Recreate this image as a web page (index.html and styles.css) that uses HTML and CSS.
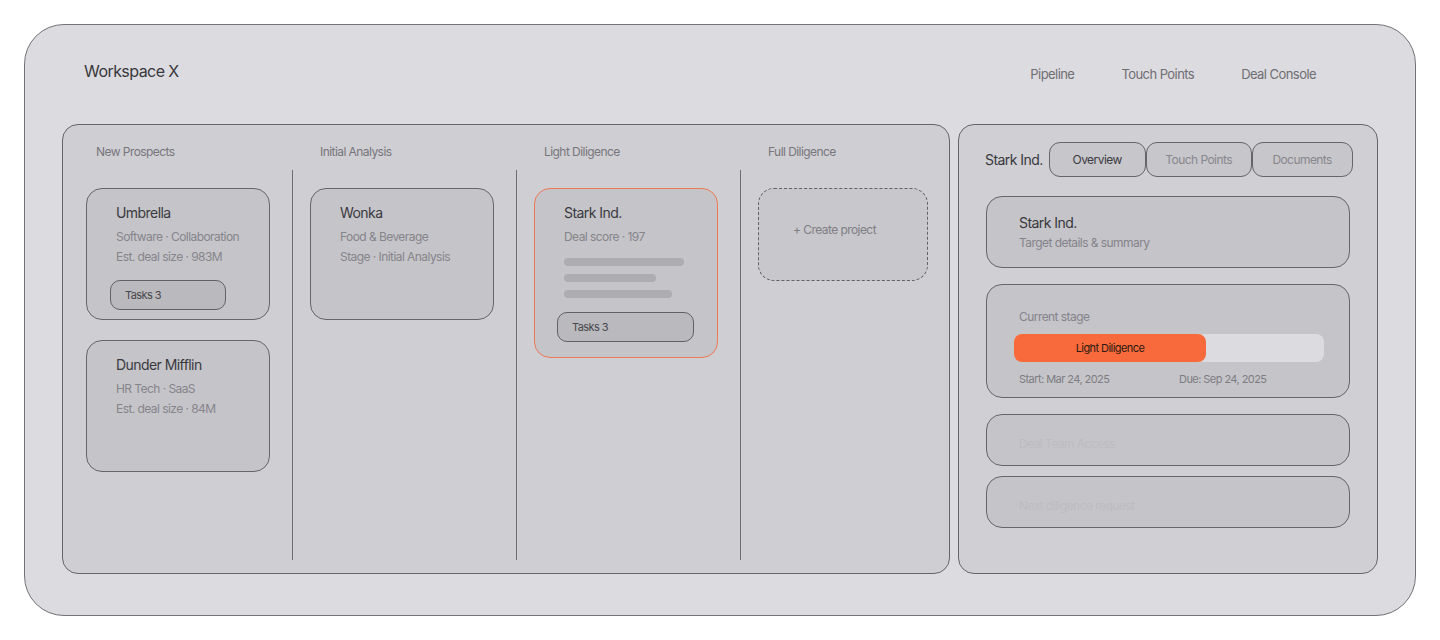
FILE: index.html
```html
<!DOCTYPE html>
<html lang="en">
<head>
<meta charset="utf-8">
<title>Workspace X</title>
<link rel="stylesheet" href="styles.css">
</head>
<body>
<div class="frame">
  <header class="topbar">
    <div class="brand">Workspace X</div>
    <nav class="nav">
      <span>Pipeline</span>
      <span>Touch Points</span>
      <span>Deal Console</span>
    </nav>
  </header>
  <main class="main">
    <section class="board">
      <div class="heads">
        <div class="head">New Prospects</div>
        <div class="head">Initial Analysis</div>
        <div class="head">Light Diligence</div>
        <div class="head">Full Diligence</div>
      </div>
      <div class="cols">
        <div class="col">
          <div class="card">
            <div class="c-title">Umbrella</div>
            <div class="c-line">Software · Collaboration</div>
            <div class="c-line">Est. deal size · 983M</div>
            <div class="tasks">Tasks 3</div>
          </div>
          <div class="card">
            <div class="c-title">Dunder Mifflin</div>
            <div class="c-line">HR Tech · SaaS</div>
            <div class="c-line">Est. deal size · 84M</div>
          </div>
        </div>
        <div class="col sep">
          <div class="card">
            <div class="c-title">Wonka</div>
            <div class="c-line">Food &amp; Beverage</div>
            <div class="c-line">Stage · Initial Analysis</div>
          </div>
        </div>
        <div class="col sep">
          <div class="card card-active">
            <div class="c-title">Stark Ind.</div>
            <div class="c-line">Deal score · 197</div>
            <div class="skel">
              <span class="sk sk1"></span>
              <span class="sk sk2"></span>
              <span class="sk sk3"></span>
            </div>
            <div class="tasks tasks-wide">Tasks 3</div>
          </div>
        </div>
        <div class="col sep">
          <div class="create">+ Create project</div>
        </div>
      </div>
    </section>
    <aside class="panel">
      <div class="p-head">
        <div class="p-name">Stark Ind.</div>
        <div class="tabs">
          <div class="tab tab-on t1">Overview</div>
          <div class="tab t2">Touch Points</div>
          <div class="tab t3">Documents</div>
        </div>
      </div>
      <div class="box box-sum">
        <div class="b-title">Stark Ind.</div>
        <div class="b-sub">Target details &amp; summary</div>
      </div>
      <div class="box box-stage">
        <div class="b-sub">Current stage</div>
        <div class="track"><div class="fill" style="width:192px">Light Diligence</div></div>
        <div class="dates">
          <span class="d1">Start: Mar 24, 2025</span>
          <span>Due: Sep 24, 2025</span>
        </div>
      </div>
      <div class="box box-ghost"><span class="ghost">Deal Team Access</span></div>
      <div class="box box-ghost box-last"><span class="ghost">Next diligence request</span></div>
    </aside>
  </main>
</div>
</body>
</html>
```
FILE: styles.css
```css
* { box-sizing: border-box; }
html, body { margin: 0; padding: 0; background: #ffffff; }
body {
  padding: 24px;
  font-family: Inter, "Noto Sans", "Liberation Sans", sans-serif;
  color: #3a3a3e;
  letter-spacing: -0.035em;
}
.frame {
  width: 1392px;
  height: 592px;
  border: 1px solid #737277;
  border-radius: 40px;
  background: #dcdbdf;
  padding: 0 37px 41px;
  display: flex;
  flex-direction: column;
}
.topbar {
  height: 99px;
  display: flex;
  justify-content: space-between;
  align-items: flex-start;
  padding: 36px 62px 0 22px;
}
.brand { font-size: 16px; line-height: 20px; color: #38383c; }
.nav { display: flex; gap: 47px; padding-top: 3px; font-size: 13px; line-height: 20px; color: #6f6e73; }
.main { flex: 1; display: flex; gap: 8px; }
.board {
  width: 888px;
  border: 1px solid #66656a;
  border-radius: 16px;
  background: #cfced3;
  padding: 0 0 13px 5px;
  display: flex;
  flex-direction: column;
}
.heads, .cols { display: grid; grid-template-columns: 224px 224px 224px 1fr; }
.heads { height: 45px; }
.head { padding: 19px 0 0 28px; font-size: 12px; line-height: 16px; color: #77767b; }
.cols { flex: 1; }
.col { padding: 18px 0 0 18px; display: flex; flex-direction: column; gap: 20px; }
.col.sep { border-left: 1px solid #6f6e73; padding-left: 17px; }
.card {
  width: 184px;
  height: 132px;
  border: 1px solid #66656a;
  border-radius: 16px;
  background: #c5c4c9;
  padding: 15px 0 0 29px;
}
.card-active { height: 170px; border-color: #ec7a55; }
.c-title { font-size: 14px; line-height: 18px; color: #3a3a3e; margin-bottom: 5px; }
.c-line { font-size: 12px; line-height: 20px; color: #86858a; }
.tasks {
  margin: 13px 0 0 -6px;
  width: 116px;
  height: 30px;
  border: 1px solid #626166;
  border-radius: 10px;
  background: #bab9be;
  font-size: 11px;
  line-height: 28px;
  padding-left: 14px;
  color: #48474c;
}
.skel { display: flex; flex-direction: column; gap: 8px; margin-top: 11px; }
.sk { display: block; height: 8px; border-radius: 4px; background: #adacb1; }
.sk1 { width: 120px; }
.sk2 { width: 92px; }
.sk3 { width: 108px; }
.tasks-wide { width: 137px; margin-left: -7px; margin-top: 14px; }
.create {
  width: 170px;
  height: 93px;
  border: 1.5px dashed #626166;
  border-radius: 16px;
  background: #c8c7cc;
  font-size: 12px;
  line-height: 16px;
  color: #7f7e83;
  padding: 33px 0 0 34px;
}
.panel {
  width: 420px;
  border: 1px solid #66656a;
  border-radius: 16px;
  background: #d0cfd4;
  padding: 17px 27px 0 26px;
  display: flex;
  flex-direction: column;
}
.p-head { display: flex; align-items: center; gap: 6px; height: 35px; margin-bottom: 19px; }
.p-name { font-size: 14px; color: #38383c; white-space: nowrap; flex-shrink: 0; }
.tabs { display: flex; flex-shrink: 0; }
.tab {
  height: 35px;
  border: 1px solid #66656a;
  border-radius: 11px;
  background: #c7c6cb;
  font-size: 12px;
  line-height: 33px;
  text-align: center;
  color: #88878c;
  white-space: nowrap;
}
.tab-on { color: #3a3a3e; }
.t1 { width: 97px; }
.t2 { width: 106px; }
.t3 { width: 101px; }
.box {
  width: 364px;
  margin-left: 1px;
  border: 1px solid #66656a;
  border-radius: 16px;
  background: #c5c4c9;
  padding: 0 0 0 32px;
  margin-bottom: 16px;
}
.box-sum { height: 72px; padding-top: 17px; }
.b-title { font-size: 14px; line-height: 18px; color: #38383c; }
.b-sub { font-size: 12px; line-height: 20px; color: #84838a; }
.box-sum .b-sub { margin-top: 1px; }
.box-stage { height: 114px; padding-top: 22px; }
.track {
  margin: 7px 0 0 -5px;
  width: 310px;
  height: 28px;
  border-radius: 8px;
  background: #dcdbdf;
}
.fill {
  height: 28px;
  border-radius: 8px;
  background: #f86a3b;
  font-size: 11px;
  line-height: 28px;
  text-align: center;
  color: #2b1a12;
}
.dates { display: flex; margin-top: 7px; font-size: 11px; line-height: 20px; color: #7d7c81; }
.d1 { width: 160px; }
.box-ghost { height: 52px; padding-top: 17px; margin-bottom: 10px; }
.ghost { font-size: 12px; line-height: 18px; color: #bdbcc1; }
```
